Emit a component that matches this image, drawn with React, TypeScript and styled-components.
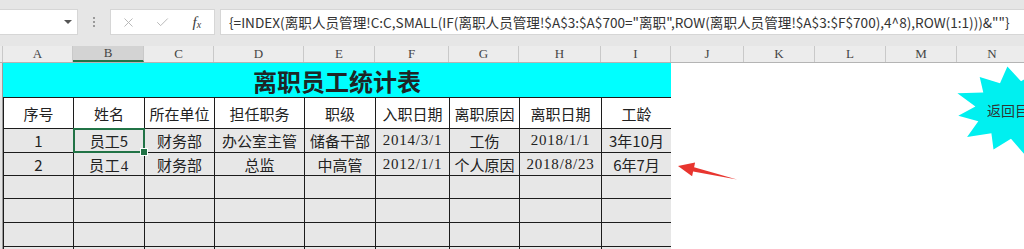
import React from 'react';
import styled, { createGlobalStyle, css } from 'styled-components';
import { X, Check } from 'lucide-react';

const GlobalStyle = createGlobalStyle`
  html, body {
    margin: 0;
    padding: 0;
    background: #fff;
  }
  body {
    font-family: "Noto Sans CJK SC", sans-serif;
  }
`;

const Window = styled.div`
  width: 1024px;
  height: 249px;
  overflow: hidden;
  display: flex;
  flex-direction: column;
`;

const FormulaBar = styled.div`
  height: 46px;
  flex: none;
  box-sizing: border-box;
  padding-top: 9px;
  background: #e6e6e6;
  display: flex;
  align-items: flex-start;
`;

const NameBox = styled.div`
  width: 78px;
  height: 26px;
  box-sizing: border-box;
  background: #fff;
  border: 1px solid #d6d6d6;
  border-left: none;
  display: flex;
  align-items: center;
  justify-content: flex-end;
  padding-right: 5px;
`;

const DropArrow = styled.span`
  width: 0;
  height: 0;
  border-left: 4px solid transparent;
  border-right: 4px solid transparent;
  border-top: 4px solid #555;
`;

const Grip = styled.div`
  width: 32px;
  height: 26px;
  display: flex;
  flex-direction: column;
  align-items: center;
  justify-content: center;
  gap: 2px;
`;

const GripDot = styled.span`
  width: 2px;
  height: 2px;
  background: #9a9a9a;
`;

const ButtonBox = styled.div`
  width: 105px;
  height: 26px;
  box-sizing: border-box;
  background: #fff;
  border: 1px solid #d6d6d6;
  display: grid;
  grid-template-columns: repeat(3, 1fr);
  align-items: center;
  justify-items: center;
  color: #b4b4b4;
`;

const Fx = styled.span`
  font-family: "Liberation Serif", serif;
  font-style: italic;
  font-size: 15px;
  color: #3a3a3a;
  line-height: 1;

  sub {
    font-size: 10px;
    vertical-align: -1px;
  }
`;

const FormulaInput = styled.div`
  flex: 1;
  margin-left: 5px;
  height: 26px;
  box-sizing: border-box;
  background: #fff;
  border: 1px solid #d6d6d6;
  border-right: none;
  padding-left: 8px;
  display: flex;
  align-items: center;
  font-size: 13.6px;
  color: #333;
  white-space: nowrap;
  overflow: hidden;
`;

const ColumnHeader = styled.div`
  height: 17px;
  flex: none;
  box-sizing: border-box;
  display: flex;
  background: #ececec;
  border-bottom: 1px solid #b4b4b4;
`;

const ColLetter = styled.div<{ $w: number; $active?: boolean }>`
  width: ${p => p.$w}px;
  flex: none;
  box-sizing: border-box;
  border-right: 1px solid #c9c9c9;
  display: flex;
  align-items: center;
  justify-content: center;
  font-family: "Liberation Serif", serif;
  font-size: 13px;
  color: #444;
  ${p =>
    p.$active &&
    css`
      background: #d3d3d3;
      border-bottom: 2px solid #217346;
    `}
`;

const Body = styled.div`
  flex: 1;
  display: flex;
  position: relative;
  min-height: 0;
`;

const RowStrip = styled.div`
  width: 3px;
  flex: none;
  box-sizing: border-box;
  background: #e4e4e4;
  border-right: 1px solid #9c9c9c;
`;

const TableBlock = styled.div`
  width: 668px;
  flex: none;
`;

const Title = styled.div`
  height: 34px;
  background: #00ffff;
  display: flex;
  align-items: center;
  justify-content: center;
  font-size: 24px;
  font-weight: 700;
  color: #1e2626;
`;

const Sheet = styled.table`
  border-collapse: collapse;
  table-layout: fixed;
  width: 668px;
`;

const Row = styled.tr<{ $h: number }>`
  height: ${p => p.$h}px;
`;

const Cell = styled.td<{ $head?: boolean; $serif?: boolean; $selected?: boolean }>`
  border: 1px solid #1c1c1c;
  padding: 0;
  text-align: center;
  white-space: nowrap;
  font-size: 15px;
  color: #222;
  background: ${p => (p.$head ? '#fff' : '#e7e7e7')};
  font-family: ${p =>
    p.$serif ? '"Liberation Serif", "Noto Sans CJK SC", serif' : '"Noto Sans CJK SC", sans-serif'};
  letter-spacing: ${p => (p.$serif ? '0.8px' : '0')};
  ${p =>
    p.$selected &&
    css`
      position: relative;
      &::after {
        content: '';
        position: absolute;
        inset: -1px;
        border: 2px solid #217346;
      }
      &::before {
        content: '';
        position: absolute;
        right: -4px;
        bottom: -4px;
        width: 6px;
        height: 6px;
        background: #217346;
        border: 1px solid #fff;
        z-index: 1;
      }
    `}
`;

const Blank = styled.div`
  flex: 1;
  background: #fff;
`;

const Burst = styled.div`
  position: absolute;
  left: 940px;
  top: 0;
  width: 150px;
  height: 100px;
`;

const BurstLabel = styled.span`
  position: absolute;
  left: 47px;
  top: 37px;
  font-size: 14px;
  line-height: 20px;
  color: #2e3636;
  white-space: nowrap;
`;

const Pointer = styled.svg`
  position: absolute;
  left: 670px;
  top: 92px;
`;

const COLS = [
  { k: 'A', w: 70 },
  { k: 'B', w: 71 },
  { k: 'C', w: 70 },
  { k: 'D', w: 90 },
  { k: 'E', w: 71 },
  { k: 'F', w: 74 },
  { k: 'G', w: 70 },
  { k: 'H', w: 82 },
  { k: 'I', w: 70 },
  { k: 'J', w: 73 },
  { k: 'K', w: 71 },
  { k: 'L', w: 71 },
  { k: 'M', w: 71 },
  { k: 'N', w: 71 },
];

const HEADERS = ['序号', '姓名', '所在单位', '担任职务', '职级', '入职日期', '离职原因', '离职日期', '工龄'];

const ROWS = [
  ['1', '员工5', '财务部', '办公室主管', '储备干部', '2014/3/1', '工伤', '2018/1/1', '3年10月'],
  ['2', '员工4', '财务部', '总监', '中高管', '2012/1/1', '个人原因', '2018/8/23', '6年7月'],
];

const SERIF_COLS = [5, 7];
const EMPTY_ROWS = [23, 24, 24, 24];

const FORMULA =
  '{=INDEX(离职人员管理!C:C,SMALL(IF(离职人员管理!$A$3:$A$700="离职",ROW(离职人员管理!$A$3:$F$700),4^8),ROW(1:1)))&""}';

const SPIKES = [1, 0.93, 1.04, 0.96, 1, 0.92, 1.03, 0.97, 1, 0.94, 1.02, 0.95];

const starPoints = (cx: number, cy: number, rx: number, ry: number, n: number, inner: number, rot: number) => {
  const pts: string[] = [];
  for (let i = 0; i < n * 2; i++) {
    const a = rot + (Math.PI * i) / n;
    const r = i % 2 === 0 ? SPIKES[(i / 2) % SPIKES.length] : inner;
    pts.push(`${(cx + Math.cos(a) * rx * r).toFixed(1)},${(cy + Math.sin(a) * ry * r).toFixed(1)}`);
  }
  return pts.join(' ');
};

export default function App() {
  return (
    <>
      <GlobalStyle />
      <Window>
        <FormulaBar>
          <NameBox>
            <DropArrow />
          </NameBox>
          <Grip>
            <GripDot />
            <GripDot />
            <GripDot />
          </Grip>
          <ButtonBox>
            <X size={15} strokeWidth={1.5} />
            <Check size={15} strokeWidth={1.5} />
            <Fx>
              f<sub>x</sub>
            </Fx>
          </ButtonBox>
          <FormulaInput>{FORMULA}</FormulaInput>
        </FormulaBar>

        <ColumnHeader>
          <ColLetter $w={3} />
          {COLS.map(c => (
            <ColLetter key={c.k} $w={c.w} $active={c.k === 'B'}>
              {c.k}
            </ColLetter>
          ))}
        </ColumnHeader>

        <Body>
          <RowStrip />
          <TableBlock>
            <Title>离职员工统计表</Title>
            <Sheet>
              <colgroup>
                {COLS.slice(0, 9).map(c => (
                  <col key={c.k} style={{ width: c.w }} />
                ))}
              </colgroup>
              <tbody>
                <Row $h={31}>
                  {HEADERS.map(h => (
                    <Cell key={h} $head>
                      {h}
                    </Cell>
                  ))}
                </Row>
                {ROWS.map((r, ri) => (
                  <Row key={r[0]} $h={ri === 0 ? 24 : 23}>
                    {r.map((v, ci) => (
                      <Cell
                        key={ci}
                        $serif={SERIF_COLS.includes(ci) || (ri === 1 && ci === 1)}
                        $selected={ri === 0 && ci === 1}
                      >
                        {v}
                      </Cell>
                    ))}
                  </Row>
                ))}
                {EMPTY_ROWS.map((h, i) => (
                  <Row key={i} $h={h}>
                    {HEADERS.map(k => (
                      <Cell key={k} />
                    ))}
                  </Row>
                ))}
              </tbody>
            </Sheet>
          </TableBlock>
          <Blank />

          <Burst>
            <svg width="150" height="100" viewBox="0 0 150 100">
              <polygon points={starPoints(76, 47, 62, 44, 12, 0.66, (-98 * Math.PI) / 180)} fill="#00f0f0" />
            </svg>
            <BurstLabel>返回目录</BurstLabel>
          </Burst>

          <Pointer width="75" height="30" viewBox="670 155 75 30">
            <polygon
              points="678,166 695.1,162.6 694.1,167.2 737,179.5 693.1,171.6 692.1,176.2"
              fill="#e8352f"
            />
          </Pointer>
        </Body>
      </Window>
    </>
  );
}
